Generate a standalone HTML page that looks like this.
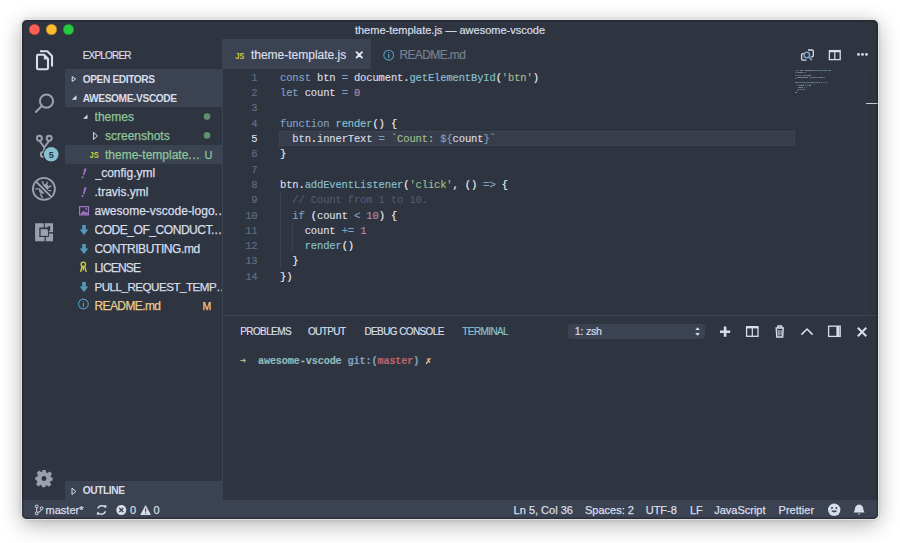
<!DOCTYPE html>
<html><head><meta charset="utf-8">
<style>
*{margin:0;padding:0;box-sizing:border-box}
html,body{width:900px;height:543px;overflow:hidden;background:#fff;font-family:"Liberation Sans",sans-serif}
.a{position:absolute;white-space:pre}
#win{position:absolute;left:22px;top:20.2px;width:856px;height:498.7px;border-radius:5px;background:#2E3440;overflow:hidden;
 box-shadow:0 0 0 1px rgba(235,235,235,0.75),0 0 3px 1px rgba(0,0,0,0.14),0 5px 22px rgba(0,0,0,0.33)}
#rim{position:absolute;left:22px;top:20.2px;width:856px;height:498.7px;border-radius:5px;box-shadow:inset 0 0 0 1.4px rgba(12,14,20,0.32);pointer-events:none}
#in{position:absolute;left:-22px;top:-20.2px;width:900px;height:543px}
.dot{position:absolute;top:24.1px;width:11px;height:11px;border-radius:50%;box-shadow:inset 0 0 0 0.7px rgba(0,0,0,0.28)}
.hdr{position:absolute;left:65px;width:157.6px;height:18.9px;background:#3B4252}
.ht{position:absolute;left:82.7px;font-size:10.2px;letter-spacing:-0.4px;font-weight:bold;color:#D8DEE9;line-height:12px}
.row{position:absolute;-webkit-text-stroke:0.25px currentColor;font-size:12px;line-height:14px;color:#D8DEE9;white-space:pre;overflow:hidden;text-overflow:clip;width:127.5px}
.code{position:absolute;left:280px;-webkit-text-stroke:0.15px currentColor;letter-spacing:-0.14px;font-family:"Liberation Mono",monospace;font-size:10.5px;line-height:15.3px;white-space:pre;color:#D8DEE9}
.ln{position:absolute;white-space:pre;left:222px;width:35.5px;text-align:right;-webkit-text-stroke:0.15px currentColor;letter-spacing:-0.14px;font-family:"Liberation Mono",monospace;font-size:10.5px;line-height:15.3px;color:#646e82}
.k{color:#81A1C1}.f{color:#88C0D0}.s{color:#A3BE8C}.n{color:#B48EAD}.c{color:#515b6e}.p{color:#ECEFF4}
.st{position:absolute;top:502.8px;-webkit-text-stroke:0.25px currentColor;font-size:11px;line-height:14px;color:#D8DEE9;white-space:pre}
.pt{position:absolute;-webkit-text-stroke:0.2px currentColor;letter-spacing:-0.6px;top:326.2px;font-size:10px;line-height:12px;color:#D8DEE9;white-space:pre}
.g{position:absolute;width:1px;background:#3B4252}
</style></head><body>
<div id="win"><div id="in">
  <!-- title bar -->
  <div class="dot" style="left:28.9px;background:#FF5F57"></div>
  <div class="dot" style="left:46.1px;background:#FEBC2E"></div>
  <div class="dot" style="left:63.2px;background:#28C840"></div>
  <div class="a" style="left:0;top:23px;width:900px;text-align:center;font-size:11px;-webkit-text-stroke:0.2px currentColor;line-height:14px;color:#D8DEE9">theme-template.js — awesome-vscode</div>

  <!-- sidebar -->
  <div class="a" style="left:222px;top:39.4px;width:1px;height:461px;background:#3B4252"></div>
  <div class="a" style="left:82.7px;top:49.9px;font-size:10px;letter-spacing:-0.8px;-webkit-text-stroke:0.2px currentColor;line-height:12px;color:#D8DEE9">EXPLORER</div>
  <div class="hdr" style="top:69.3px"></div>
  <div class="hdr" style="top:88.2px"></div>
  <div class="ht" style="top:73.7px">OPEN EDITORS</div>
  <div class="ht" style="top:92.6px">AWESOME-VSCODE</div>

  <div class="hdr" style="top:145px;background:#3B4252"></div>
  <div class="row" style="left:94.6px;top:109.7px;color:#8DC69A">themes</div>
  <div class="row" style="left:105px;top:128.6px;color:#8DC69A">screenshots</div>
  <div class="row" style="left:105px;top:147.5px;color:#8DC69A;width:96px">theme-template.…</div>
  <div class="row" style="left:94.5px;top:166.4px">_config.yml</div>
  <div class="row" style="left:94.5px;top:185.3px">.travis.yml</div>
  <div class="row" style="left:94.5px;top:204.2px">awesome-vscode-logo.…</div>
  <div class="row" style="left:94.5px;top:223.1px;letter-spacing:-0.45px">CODE_OF_CONDUCT.…</div>
  <div class="row" style="left:94.5px;top:242px;letter-spacing:-0.4px">CONTRIBUTING.md</div>
  <div class="row" style="left:94.5px;top:260.9px;letter-spacing:-0.8px">LICENSE</div>
  <div class="row" style="left:94.5px;top:279.8px;letter-spacing:-0.5px;font-size:11.6px">PULL_REQUEST_TEMP…</div>
  <div class="row" style="left:94.5px;top:298.7px;color:#EBCB8B;letter-spacing:-0.6px">README.md</div>

  <div class="row" style="left:204.4px;top:148px;color:#8DC69A;width:12px;font-size:11px">U</div>
  <div class="row" style="left:202.6px;top:298.7px;color:#EBCB8B;width:14px;font-size:10.5px">M</div>
  <div class="hdr" style="top:481.2px"></div>
  <div class="ht" style="top:485.4px">OUTLINE</div>

  <!-- editor tabs -->
  <div class="a" style="left:222.6px;top:39.4px;width:148.4px;height:29.3px;background:#3B4252"></div>
  <div class="a" style="left:250.9px;top:48.2px;-webkit-text-stroke:0.2px currentColor;font-size:12px;line-height:14px;color:#D8DEE9">theme-template.js</div>
  <div class="a" style="left:399.4px;top:48.2px;letter-spacing:-0.6px;-webkit-text-stroke:0.2px currentColor;font-size:12px;line-height:14px;color:#778090">README.md</div>

  <!-- line highlight -->
  <div class="a" style="left:279.2px;top:131.1px;width:516px;height:15.3px;background:#373d4b;border:1px solid #3d4453"></div>
  <!-- indent guides -->
  <div class="g" style="left:279.6px;top:192px;height:76.5px"></div>
  <div class="g" style="left:291.8px;top:222.6px;height:30.6px"></div>

  <!-- line numbers -->
  <div class="ln" style="top:70.9px">1
2
3
4
<span style="color:#D8DEE9">5</span>
6
7
8
9
10
11
12
13
14</div>
  <div class="code" style="top:70.9px"><span class="k">const</span> btn <span class="k">=</span> document<span class="p">.</span><span class="f">getElementById</span><span class="p">(</span><span class="s">'btn'</span><span class="p">)</span>
<span class="k">let</span> count <span class="k">=</span> <span class="n">0</span>

<span class="k">function</span> <span class="f">render</span><span class="p">() {</span>
  btn<span class="p">.</span>innerText <span class="k">=</span> <span class="s">`Count: </span><span class="k">${</span>count<span class="k">}</span><span class="s">`</span>
<span class="p">}</span>

btn<span class="p">.</span><span class="f">addEventListener</span><span class="p">(</span><span class="s">'click'</span><span class="p">, () </span><span class="k">=&gt;</span> <span class="p">{</span>
  <span class="c">// Count from 1 to 10.</span>
  <span class="k">if</span> <span class="p">(</span>count <span class="k">&lt;</span> <span class="n">10</span><span class="p">) {</span>
    count <span class="k">+=</span> <span class="n">1</span>
    <span class="f">render</span><span class="p">()</span>
  <span class="p">}</span>
<span class="p">})</span></div>


  <!-- minimap -->
  <div class="a" style="left:0;top:0;opacity:0.4">
<div class="a" style="left:795.00px;top:69.90px;width:4.29px;height:1.1px;background:#81A1C1"></div>
<div class="a" style="left:800.14px;top:69.90px;width:2.57px;height:1.1px;background:#D8DEE9"></div>
<div class="a" style="left:803.57px;top:69.90px;width:0.86px;height:1.1px;background:#81A1C1"></div>
<div class="a" style="left:805.28px;top:69.90px;width:6.86px;height:1.1px;background:#D8DEE9"></div>
<div class="a" style="left:812.14px;top:69.90px;width:0.86px;height:1.1px;background:#ECEFF4"></div>
<div class="a" style="left:813.00px;top:69.90px;width:12.00px;height:1.1px;background:#88C0D0"></div>
<div class="a" style="left:825.00px;top:69.90px;width:0.86px;height:1.1px;background:#ECEFF4"></div>
<div class="a" style="left:825.85px;top:69.90px;width:4.29px;height:1.1px;background:#A3BE8C"></div>
<div class="a" style="left:830.14px;top:69.90px;width:0.86px;height:1.1px;background:#ECEFF4"></div>
<div class="a" style="left:795.00px;top:71.60px;width:2.57px;height:1.1px;background:#81A1C1"></div>
<div class="a" style="left:798.43px;top:71.60px;width:4.29px;height:1.1px;background:#D8DEE9"></div>
<div class="a" style="left:803.57px;top:71.60px;width:0.86px;height:1.1px;background:#81A1C1"></div>
<div class="a" style="left:805.28px;top:71.60px;width:0.86px;height:1.1px;background:#B48EAD"></div>
<div class="a" style="left:795.00px;top:75.00px;width:6.86px;height:1.1px;background:#81A1C1"></div>
<div class="a" style="left:802.71px;top:75.00px;width:5.14px;height:1.1px;background:#88C0D0"></div>
<div class="a" style="left:807.86px;top:75.00px;width:1.71px;height:1.1px;background:#ECEFF4"></div>
<div class="a" style="left:810.43px;top:75.00px;width:0.86px;height:1.1px;background:#ECEFF4"></div>
<div class="a" style="left:796.71px;top:76.70px;width:2.57px;height:1.1px;background:#D8DEE9"></div>
<div class="a" style="left:799.28px;top:76.70px;width:0.86px;height:1.1px;background:#ECEFF4"></div>
<div class="a" style="left:800.14px;top:76.70px;width:7.71px;height:1.1px;background:#D8DEE9"></div>
<div class="a" style="left:808.71px;top:76.70px;width:0.86px;height:1.1px;background:#81A1C1"></div>
<div class="a" style="left:810.43px;top:76.70px;width:6.86px;height:1.1px;background:#A3BE8C"></div>
<div class="a" style="left:817.28px;top:76.70px;width:1.71px;height:1.1px;background:#81A1C1"></div>
<div class="a" style="left:819.00px;top:76.70px;width:4.29px;height:1.1px;background:#D8DEE9"></div>
<div class="a" style="left:823.28px;top:76.70px;width:0.86px;height:1.1px;background:#81A1C1"></div>
<div class="a" style="left:824.14px;top:76.70px;width:0.86px;height:1.1px;background:#A3BE8C"></div>
<div class="a" style="left:795.00px;top:78.40px;width:0.86px;height:1.1px;background:#ECEFF4"></div>
<div class="a" style="left:795.00px;top:81.80px;width:2.57px;height:1.1px;background:#D8DEE9"></div>
<div class="a" style="left:797.57px;top:81.80px;width:0.86px;height:1.1px;background:#ECEFF4"></div>
<div class="a" style="left:798.43px;top:81.80px;width:13.71px;height:1.1px;background:#88C0D0"></div>
<div class="a" style="left:812.14px;top:81.80px;width:0.86px;height:1.1px;background:#ECEFF4"></div>
<div class="a" style="left:813.00px;top:81.80px;width:6.00px;height:1.1px;background:#A3BE8C"></div>
<div class="a" style="left:819.00px;top:81.80px;width:0.86px;height:1.1px;background:#ECEFF4"></div>
<div class="a" style="left:820.71px;top:81.80px;width:1.71px;height:1.1px;background:#ECEFF4"></div>
<div class="a" style="left:823.28px;top:81.80px;width:1.71px;height:1.1px;background:#81A1C1"></div>
<div class="a" style="left:825.85px;top:81.80px;width:0.86px;height:1.1px;background:#ECEFF4"></div>
<div class="a" style="left:796.71px;top:83.50px;width:1.71px;height:1.1px;background:#4C566A"></div>
<div class="a" style="left:799.28px;top:83.50px;width:4.29px;height:1.1px;background:#4C566A"></div>
<div class="a" style="left:804.43px;top:83.50px;width:3.43px;height:1.1px;background:#4C566A"></div>
<div class="a" style="left:808.71px;top:83.50px;width:0.86px;height:1.1px;background:#4C566A"></div>
<div class="a" style="left:810.43px;top:83.50px;width:1.71px;height:1.1px;background:#4C566A"></div>
<div class="a" style="left:813.00px;top:83.50px;width:2.57px;height:1.1px;background:#4C566A"></div>
<div class="a" style="left:796.71px;top:85.20px;width:1.71px;height:1.1px;background:#81A1C1"></div>
<div class="a" style="left:799.28px;top:85.20px;width:0.86px;height:1.1px;background:#ECEFF4"></div>
<div class="a" style="left:800.14px;top:85.20px;width:4.29px;height:1.1px;background:#D8DEE9"></div>
<div class="a" style="left:805.28px;top:85.20px;width:0.86px;height:1.1px;background:#81A1C1"></div>
<div class="a" style="left:807.00px;top:85.20px;width:1.71px;height:1.1px;background:#B48EAD"></div>
<div class="a" style="left:808.71px;top:85.20px;width:0.86px;height:1.1px;background:#ECEFF4"></div>
<div class="a" style="left:810.43px;top:85.20px;width:0.86px;height:1.1px;background:#ECEFF4"></div>
<div class="a" style="left:798.43px;top:86.90px;width:4.29px;height:1.1px;background:#D8DEE9"></div>
<div class="a" style="left:803.57px;top:86.90px;width:1.71px;height:1.1px;background:#81A1C1"></div>
<div class="a" style="left:806.14px;top:86.90px;width:0.86px;height:1.1px;background:#B48EAD"></div>
<div class="a" style="left:798.43px;top:88.60px;width:5.14px;height:1.1px;background:#88C0D0"></div>
<div class="a" style="left:803.57px;top:88.60px;width:1.71px;height:1.1px;background:#ECEFF4"></div>
<div class="a" style="left:796.71px;top:90.30px;width:0.86px;height:1.1px;background:#ECEFF4"></div>
<div class="a" style="left:795.00px;top:92.00px;width:1.71px;height:1.1px;background:#ECEFF4"></div>
</div>
  <div class="a" style="left:865px;top:69px;width:1px;height:246px;background:#343a47"></div>
  <div class="a" style="left:865.5px;top:102.5px;width:12px;height:1.6px;background:#c5cad3"></div>
  <!-- panel -->
  <div class="a" style="left:222.6px;top:315px;width:656px;height:1px;background:#3B4252"></div>
  <div class="pt" style="left:240.2px">PROBLEMS</div>
  <div class="pt" style="left:307.9px">OUTPUT</div>
  <div class="pt" style="left:364.4px">DEBUG CONSOLE</div>
  <div class="pt" style="left:462.3px;color:#88C0D0">TERMINAL</div>
  <div class="a" style="left:567.6px;top:324px;width:137px;height:15px;border-radius:3px;background:#3B4252"></div>
  <div class="a" style="left:574.7px;top:325.3px;font-size:10.5px;letter-spacing:-0.15px;-webkit-text-stroke:0.2px currentColor;line-height:13px;color:#D8DEE9">1: zsh</div>

  <div class="code" style="left:240px;top:353.7px;font-weight:bold;font-size:10.2px"><span style="color:#A3BE8C">➜</span>  <span style="color:#8FBCBB">awesome-vscode</span> <span class="k">git:(</span><span style="color:#BF616A">master</span><span class="k">)</span> <span style="color:#EBCB8B">✗</span></div>

  <!-- status bar -->
  <div class="a" style="left:22px;top:500px;width:856px;height:19.5px;background:#3B4252"></div>
  <div class="st" style="left:45.6px">master*</div>
  <div class="st" style="left:130px">0</div>
  <div class="st" style="left:153.6px">0</div>
  <div class="st" style="left:513.6px">Ln 5, Col 36</div>
  <div class="st" style="left:585px">Spaces: 2</div>
  <div class="st" style="left:645.7px">UTF-8</div>
  <div class="st" style="left:690px">LF</div>
  <div class="st" style="left:714.2px">JavaScript</div>
  <div class="st" style="left:778.6px">Prettier</div>

  <svg class="a" style="left:0;top:0" width="900" height="543" viewBox="0 0 900 543">
    <!-- files icon -->
    <g fill="none" stroke="#D8DEE9" stroke-width="2.1" stroke-linejoin="round">
      <path d="M38.3 54.7 H44 L48 58.7 V68 Q48 69.3 46.7 69.3 H38.3 Q37 69.3 37 68 V56 Q37 54.7 38.3 54.7 Z"/>
      <path d="M40 51.3 H47.3 L52 56 V66.4"/>
    </g>
    <path d="M43.8 54 V59.6 H49.4 Z" fill="#D8DEE9"/>
    <!-- search icon -->
    <g fill="none" stroke="#9aa1ae" stroke-width="2" stroke-linecap="round">
      <circle cx="46.5" cy="101.1" r="6.6"/>
      <path d="M41.6 106.2 L35.8 112"/>
    </g>
    <!-- git icon -->
    <g fill="none" stroke="#9aa1ae" stroke-width="1.9">
      <circle cx="39.4" cy="138.3" r="2.5"/>
      <circle cx="49.2" cy="138.3" r="2.5"/>
      <circle cx="43.2" cy="154.4" r="2.4"/>
      <path d="M39.6 140.9 L44.3 147.5 L49 140.9 M44.3 147.5 L43.6 152" stroke-linejoin="round"/>
    </g>
    <circle cx="51.2" cy="154.3" r="8.3" fill="#2E3440"/>
    <circle cx="51.2" cy="154.3" r="7.3" fill="#88C0D0"/>
    <text x="51.3" y="157.5" text-anchor="middle" font-family="Liberation Sans" font-weight="bold" font-size="9" fill="#2E3440">5</text>
    <!-- debug icon -->
    <circle cx="43.9" cy="188.9" r="11" fill="none" stroke="#9aa1ae" stroke-width="1.9"/>
    <ellipse cx="43.8" cy="188.9" rx="3.9" ry="5.6" transform="rotate(45 43.8 188.9)" fill="#9aa1ae"/>
    <g stroke="#9aa1ae" stroke-width="1.4" stroke-linecap="round" fill="none">
      <path d="M35.6 188.9 H39.2 M40.6 194.6 L42.6 197.6 M42.4 181.6 L43.4 184.2 M47.3 182.4 L46.4 184.6 M50.8 185.8 L48.4 187.4 M50.8 190.6 L48.2 190.6"/>
    </g>
    <path d="M36.7 182.2 L51.1 196.6" stroke="#2E3440" stroke-width="4.4"/>
    <path d="M36.2 181.7 L51.6 197.1" stroke="#9aa1ae" stroke-width="2"/>
    <!-- extensions icon -->
    <g fill="#9aa1ae">
      <path fill-rule="evenodd" d="M35.1 223.3 H53.05 V241.3 H35.1 Z M39.3 227.4 H48.9 V237.1 H39.3 Z"/>
      <rect x="40.6" y="229.1" width="7.4" height="6.8"/>
    </g>
    <g fill="#2E3440">
      <rect x="43.7" y="223" width="1.1" height="5"/>
      <rect x="44.6" y="236.5" width="1.3" height="5.2"/>
      <rect x="48.5" y="232.2" width="5" height="1.4"/>
      <rect x="47.6" y="226.2" width="2.6" height="4.6"/>
    </g>
    <!-- gear -->
    <g transform="translate(44 478.5)" fill="#9aa1ae">
      <path fill-rule="evenodd" d="M-1.6 -8.6 H1.6 L2.1 -6.1 L3.6 -5.5 L5.7 -7 L8 -4.7 L6.5 -2.6 L7.1 -1.1 L8.6 -1.1 V2.1 L6.6 2.5 L6 4 L7.3 6 L5 8.3 L3 6.8 L1.5 7.4 L1.2 8.8 H-1.8 L-2.2 7.1 L-3.7 6.5 L-5.7 8 L-8 5.7 L-6.5 3.6 L-7.1 2.1 L-8.6 1.6 V-1.6 L-6.6 -2.1 L-6 -3.6 L-7.3 -5.6 L-5 -7.9 L-3 -6.5 L-1.5 -7.1 Z M0 -2.4 A2.4 2.4 0 1 0 0.01 -2.4 Z"/>
    </g>

    <!-- title tab icons -->
    <text x="235.2" y="58.8" font-family="Liberation Sans" font-weight="bold" font-size="9.6" fill="#CBCB41" textLength="9.2" lengthAdjust="spacingAndGlyphs">JS</text>
    <g stroke="#ECEFF4" stroke-width="1.7" stroke-linecap="round"><path d="M356.5 52.2 L362 57.7 M362 52.2 L356.5 57.7"/></g>
    <circle cx="388.7" cy="55.2" r="4.9" fill="none" stroke="#519ABA" stroke-width="1.1"/>
    <path d="M388.7 52.3 V52.9 M388.7 54.1 V58" stroke="#519ABA" stroke-width="1.3"/>

    <!-- editor actions -->
    <g fill="none" stroke="#D8DEE9" stroke-width="1.3">
      <path d="M808 50 H812 Q813.3 50 813.3 51.3 V55.6 Q813.3 56.8 812 56.8 H810.8"/>
      <path d="M804 53.6 H802.7 Q801.6 53.6 801.6 54.8 V59 Q801.6 60.1 802.7 60.1 H806.4"/>
    </g>
    <g fill="none" stroke="#81A1C1" stroke-width="1.5">
      <circle cx="806.8" cy="55" r="2.8"/>
      <path d="M808.8 57 L811.8 60.2" stroke-width="1.7"/>
    </g>
    <g fill="none" stroke="#D8DEE9">
      <rect x="829.4" y="50.6" width="10.8" height="9" stroke-width="1.3"/>
      <path d="M829.4 51.2 H840.2" stroke-width="2.2"/>
      <path d="M834.8 50.6 V59.6" stroke-width="1.2"/>
    </g>
    <g fill="#D8DEE9"><circle cx="858.5" cy="54.4" r="1.4"/><circle cx="862.5" cy="54.4" r="1.4"/><circle cx="866.5" cy="54.4" r="1.4"/></g>

    <!-- sidebar twisties -->
    <path d="M72.2 76.6 L75.6 79 L72.2 81.4 Z" fill="none" stroke="#D8DEE9" stroke-width="1"/>
    <path d="M71.8 99.8 L76.5 95.2 L76.5 99.8 Z" fill="#D8DEE9"/>
    <path d="M83 118.8 L87.5 114.5 L87.5 118.8 Z" fill="#D8DEE9"/>
    <path d="M93.6 132.3 L97.4 135.9 L93.6 139.5 Z" fill="none" stroke="#D8DEE9" stroke-width="1"/>
    <path d="M72 488.2 L75.8 491.4 L72 494.6 Z" fill="none" stroke="#D8DEE9" stroke-width="1"/>
    <circle cx="207" cy="116.6" r="3.3" fill="#5f9070"/>
    <circle cx="207" cy="135.4" r="3.3" fill="#5f9070"/>
    <!-- file icons -->
    <text x="89.6" y="158.2" font-family="Liberation Sans" font-weight="bold" font-size="9.6" fill="#CBCB41" textLength="9.2" lengthAdjust="spacingAndGlyphs">JS</text>
    <path d="M84.3 168.6 H86.7 L84.3 175.3 H82.9 Z" fill="#A074C4"/><circle cx="82.5" cy="177.2" r="1.05" fill="#A074C4"/>
    <path d="M84.3 187.5 H86.7 L84.3 194.2 H82.9 Z" fill="#A074C4"/><circle cx="82.5" cy="196.1" r="1.05" fill="#A074C4"/>
    <g fill="#A074C4">
      <path fill-rule="evenodd" d="M79 206 H89 V215.5 H79 Z M80.2 207.2 H87.8 V214.3 H80.2 Z"/>
      <path d="M80.2 214.3 L83.5 210.5 L85.5 212.5 L86.5 211.5 L88.5 214.3 Z"/>
      <circle cx="86" cy="209" r="0.9"/>
    </g>
    <g fill="#519ABA">
      <path d="M82.2 225 H85.8 V229.5 H88.3 L84 235 L79.7 229.5 H82.2 Z"/>
      <path d="M82.2 244 H85.8 V248.5 H88.3 L84 254 L79.7 248.5 H82.2 Z"/>
      <path d="M82.2 282 H85.8 V286.5 H88.3 L84 292 L79.7 286.5 H82.2 Z"/>
    </g>
    <g fill="none" stroke="#CBCB41" stroke-width="1.4">
      <circle cx="83.3" cy="264.3" r="2.2"/>
      <path d="M82 266.3 L80.6 272 M84.6 266.3 L86.3 272 M83.3 266.5 V270.5"/>
    </g>
    <circle cx="83.4" cy="304" r="4.9" fill="none" stroke="#519ABA" stroke-width="1.1"/>
    <path d="M83.4 301.1 V301.7 M83.4 302.9 V306.8" stroke="#519ABA" stroke-width="1.3"/>

    <!-- panel icons -->
    <g stroke="#D8DEE9" fill="none">
      <path d="M725.1 326.6 V336.8 M720 331.7 H730.2" stroke-width="2.6"/>
      <rect x="746.6" y="326.7" width="11.4" height="9.6" stroke-width="1.3"/>
      <path d="M746.6 327.3 H758" stroke-width="2.2"/>
      <path d="M752.3 326.7 V336.3" stroke-width="1.2"/>
      <path d="M775.5 328 H784 M778 328 V326 H781.6 V328" stroke-width="1.4"/>
      <path d="M776.3 328.5 L776.8 337 H782.7 L783.2 328.5" stroke-width="1.4"/>
      <path d="M778.3 330 V335.5 M779.8 330 V335.5 M781.3 330 V335.5" stroke-width="0.8"/>
      <path d="M801.4 334.6 L807 329 L812.6 334.6" stroke-width="1.5"/>
      <rect x="828.6" y="326.2" width="11.6" height="10.2" stroke-width="1.3"/>
      <path d="M837.9 326.2 V336.4" stroke-width="3"/>
      <path d="M857.8 327.8 L866.3 336.3 M866.3 327.8 L857.8 336.3" stroke-width="2"/>
    </g>
    <path d="M695.3 330 L697.6 327.2 L699.9 330 Z M695.3 333 L697.6 335.8 L699.9 333 Z" fill="#D8DEE9"/>

    <!-- status bar icons -->
    <g fill="none" stroke="#D8DEE9" stroke-width="1">
      <circle cx="36.7" cy="506.4" r="1.4"/>
      <circle cx="41.6" cy="508.2" r="1.4"/>
      <circle cx="36.7" cy="513.4" r="1.4"/>
      <path d="M36.7 507.8 V512 M41.4 509.6 Q40.8 512 37.8 512.4"/>
    </g>
    <g fill="none" stroke="#D8DEE9" stroke-width="1.4">
      <path d="M97.7 508.6 A4.5 4.5 0 0 1 105.3 507.3"/>
      <path d="M105.6 511.3 A4.5 4.5 0 0 1 98 512.6"/>
    </g>
    <path d="M104 505 L106.6 505.4 L106 508.4 Z M99.4 515 L96.7 514.6 L97.3 511.6 Z" fill="#D8DEE9"/>
    <circle cx="121.3" cy="510.1" r="5" fill="#D8DEE9"/>
    <path d="M119.3 508.1 L123.3 512.1 M123.3 508.1 L119.3 512.1" stroke="#3B4252" stroke-width="1.4"/>
    <path d="M145.6 505 L151 515 H140.2 Z" fill="#D8DEE9"/>
    <path d="M145.6 508.5 V511.8 M145.6 512.8 V513.8" stroke="#3B4252" stroke-width="1.2"/>
    <circle cx="834.2" cy="509.8" r="6.2" fill="#D8DEE9"/>
    <circle cx="832" cy="508" r="1" fill="#3B4252"/><circle cx="836.4" cy="508" r="1" fill="#3B4252"/>
    <path d="M831 510.5 Q834.2 514.5 837.4 510.5" fill="#3B4252"/>
    <path d="M859.1 504.5 Q863.4 505 863.4 510 L864.6 512.6 H853.6 L854.8 510 Q854.8 505 859.1 504.5 Z M857.8 513.5 A1.4 1.4 0 0 0 860.4 513.5 Z" fill="#D8DEE9"/>
  </svg>
</div></div>
<div id="rim"></div>
</body></html>
